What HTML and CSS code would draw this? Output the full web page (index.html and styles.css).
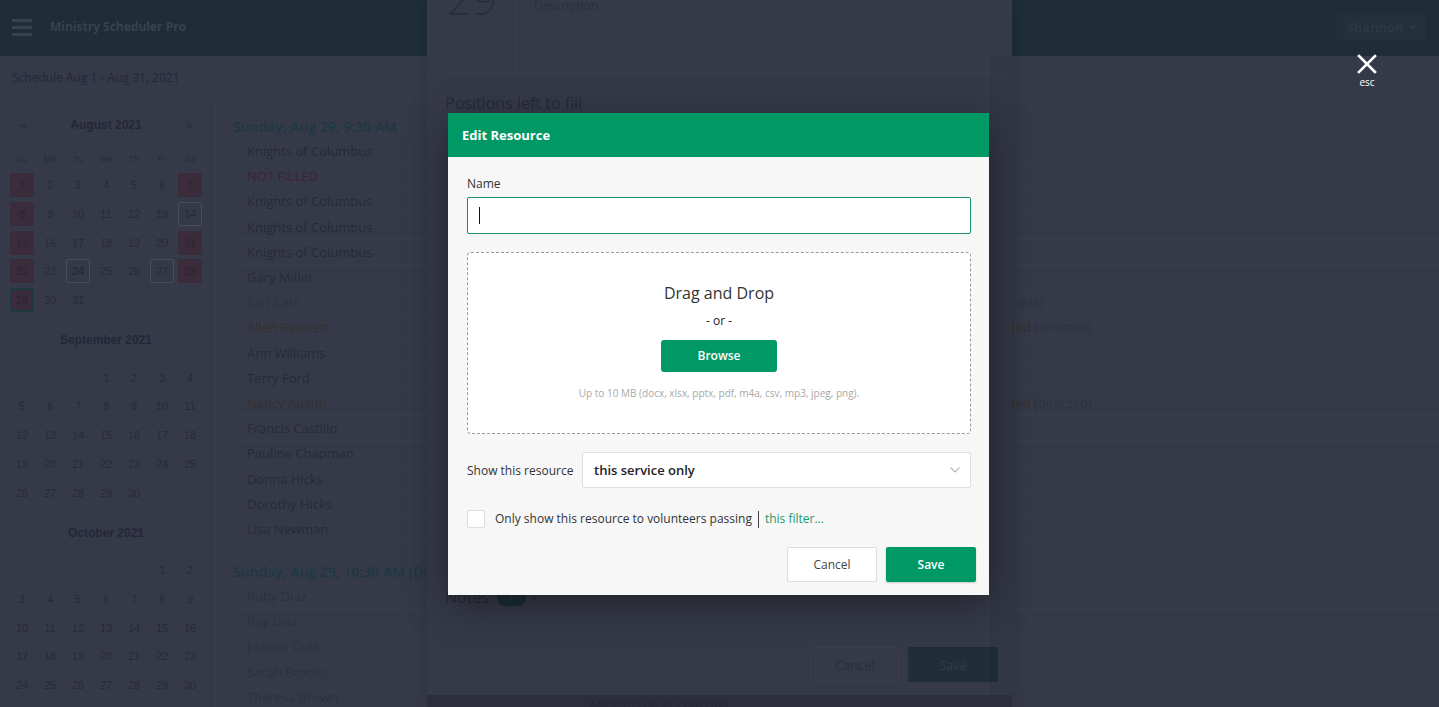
FILE: index.html
```html
<!DOCTYPE html>
<html lang="en">
<head>
<meta charset="utf-8">
<title>Ministry Scheduler Pro</title>
<link rel="stylesheet" href="styles.css">
</head>
<body>
<div class="app">
  <header class="topbar">
    <svg class="burger" viewBox="0 0 20 17" width="20" height="17"><rect x="0" y="0" width="20" height="3"/><rect x="0" y="7" width="20" height="3"/><rect x="0" y="14" width="20" height="3"/></svg>
    <div class="brand">Ministry Scheduler Pro</div>
    <div class="user">Shannon <span class="caret"></span></div>
  </header>
  <div class="subbar">Schedule Aug 1 - Aug 31, 2021</div>
  <div class="main">
    <aside class="cal">
      <div class="month">
        <div class="month-title"><span class="nav">&#9664;</span><span>August 2021</span><span class="nav">&#9654;</span></div>
        <div class="dow"><span>Su</span><span>Mo</span><span>Tu</span><span>We</span><span>Th</span><span>Fr</span><span>Sa</span></div>
        <div class="days aug">
          <span class="d hl">1</span><span class="d">2</span><span class="d">3</span><span class="d">4</span><span class="d">5</span><span class="d">6</span><span class="d hl">7</span>
          <span class="d hl">8</span><span class="d">9</span><span class="d">10</span><span class="d">11</span><span class="d">12</span><span class="d">13</span><span class="d bd">14</span>
          <span class="d hl">15</span><span class="d">16</span><span class="d">17</span><span class="d">18</span><span class="d">19</span><span class="d">20</span><span class="d hl">21</span>
          <span class="d hl">22</span><span class="d">23</span><span class="d bd b">24</span><span class="d">25</span><span class="d">26</span><span class="d bd">27</span><span class="d hl">28</span>
          <span class="d hl sel">29</span><span class="d">30</span><span class="d">31</span>
        </div>
      </div>
      <div class="month">
        <div class="month-title"><span></span><span>September 2021</span><span></span></div>
        <div class="days">
          <span></span><span></span><span></span><span class="d">1</span><span class="d">2</span><span class="d">3</span><span class="d">4</span>
          <span class="d">5</span><span class="d">6</span><span class="d">7</span><span class="d">8</span><span class="d">9</span><span class="d">10</span><span class="d">11</span>
          <span class="d">12</span><span class="d">13</span><span class="d">14</span><span class="d">15</span><span class="d">16</span><span class="d">17</span><span class="d">18</span>
          <span class="d">19</span><span class="d">20</span><span class="d">21</span><span class="d">22</span><span class="d">23</span><span class="d">24</span><span class="d">25</span>
          <span class="d">26</span><span class="d">27</span><span class="d">28</span><span class="d">29</span><span class="d">30</span>
        </div>
      </div>
      <div class="month">
        <div class="month-title"><span></span><span>October 2021</span><span></span></div>
        <div class="days">
          <span></span><span></span><span></span><span></span><span></span><span class="d">1</span><span class="d">2</span>
          <span class="d">3</span><span class="d">4</span><span class="d">5</span><span class="d">6</span><span class="d">7</span><span class="d">8</span><span class="d">9</span>
          <span class="d">10</span><span class="d">11</span><span class="d">12</span><span class="d">13</span><span class="d">14</span><span class="d">15</span><span class="d">16</span>
          <span class="d">17</span><span class="d">18</span><span class="d">19</span><span class="d">20</span><span class="d">21</span><span class="d">22</span><span class="d">23</span>
          <span class="d">24</span><span class="d">25</span><span class="d">26</span><span class="d">27</span><span class="d">28</span><span class="d">29</span><span class="d">30</span>
        </div>
      </div>
    </aside>
    <section class="list">
      <div class="svc">Sunday, Aug 29, 9:30 AM</div>
      <div class="row"><span class="nm">Knights of Columbus</span></div>
      <div class="row"><span class="nm nf">NOT FILLED</span></div>
      <div class="row"><span class="nm">Knights of Columbus</span></div>
      <div class="row"><span class="nm">Knights of Columbus</span></div>
      <div class="row"><span class="nm">Knights of Columbus</span></div>
      <div class="row"><span class="nm">Gary Miller</span></div>
      <div class="row"><span class="nm muted">Earl Carr</span><span class="st brown">(homemade)</span></div>
      <div class="row"><span class="nm brown">Allen Bennett</span><span class="st"><span class="brown">Requested</span> (directed)</span></div>
      <div class="row"><span class="nm">Ann Williams</span></div>
      <div class="row"><span class="nm">Terry Ford</span></div>
      <div class="row"><span class="nm brown">Nancy Austin</span><span class="st"><span class="brown">Requested</span> (directed)</span></div>
      <div class="row"><span class="nm">Francis Castillo</span></div>
      <div class="row"><span class="nm">Pauline Chapman</span></div>
      <div class="row"><span class="nm">Donna Hicks</span></div>
      <div class="row"><span class="nm">Dorothy Hicks</span></div>
      <div class="row"><span class="nm">Lisa Newman</span></div>
      <div class="svc second">Sunday, Aug 29, 10:30 AM (Domingo)</div>
      <div class="row"><span class="nm muted">Ruby Diaz</span></div>
      <div class="row"><span class="nm muted">Ray Diaz</span></div>
      <div class="row"><span class="nm muted">Joanne Diaz</span></div>
      <div class="row"><span class="nm muted">Sarah Brooks</span></div>
      <div class="row"><span class="nm muted">Theresa Brown</span></div>
    </section>
  </div>
</div>

<div class="panel">
  <div class="p-top">
    <div class="p-date"><span>29</span></div>
    <div class="p-desc">
      <div class="p-label">Description</div>
      <div class="p-box"></div>
    </div>
  </div>
  <div class="p-body">
    <div class="p-h">Positions left to fill</div>
    <div class="p-space"></div>
    <div class="p-notes">Notes <span class="badge">1</span> <span class="tri">&#9656;</span></div>
    <div class="p-actions">
      <div class="p-btn p-cancel">Cancel</div>
      <div class="p-btn p-save">Save</div>
    </div>
  </div>
  <div class="p-foot">Ministro de Eucharistia</div>
  <div class="p-scroll"></div>
</div>

<div class="close">
  <svg viewBox="0 0 20 20" width="20" height="20"><path d="M2 2 L18 18 M18 2 L2 18"/></svg>
  <span>esc</span>
</div>

<div class="modal">
  <div class="m-head">Edit Resource</div>
  <div class="m-body">
    <div class="m-label">Name</div>
    <div class="m-input"><span class="cursor"></span></div>
    <div class="drop">
      <div class="drop-title">Drag and Drop</div>
      <div class="drop-or">- or -</div>
      <div class="browse">Browse</div>
      <div class="drop-hint">Up to 10 MB (docx, xlsx, pptx, pdf, m4a, csv, mp3, jpeg, png).</div>
    </div>
    <div class="show-row">
      <span class="show-label">Show this resource</span>
      <div class="select">
        <span>this service only</span>
        <svg class="chev" viewBox="0 0 10 6" width="10" height="6"><path d="M0.5 0.5 L5 5 L9.5 0.5"/></svg>
      </div>
    </div>
    <div class="check-row">
      <span class="checkbox"></span>
      <span class="check-text">Only show this resource to volunteers passing</span>
      <span class="sep"></span>
      <span class="filter">this filter...</span>
    </div>
    <div class="m-foot">
      <div class="m-btn m-cancel">Cancel</div>
      <div class="m-btn m-save">Save</div>
    </div>
  </div>
</div>
</body>
</html>
```

FILE: styles.css
```css
* { box-sizing: border-box; }

html, body {
  margin: 0;
  padding: 0;
}

body {
  width: 1439px;
  height: 707px;
  overflow: hidden;
  position: relative;
  background: #363a48;
  font-family: "Open Sans", "DejaVu Sans", sans-serif;
  color: #262a39;
}

.app {
  width: 1439px;
  height: 707px;
  display: flex;
  flex-direction: column;
}

/* top bar */
.topbar {
  height: 56px;
  flex: none;
  background: #1e2d36;
  display: flex;
  align-items: center;
  padding: 0 13px 0 12px;
}

.burger { fill: #36424d; flex: none; margin-top: -1px; }

.brand {
  margin-left: 18px;
  margin-top: -3px;
  font-size: 12px;
  font-weight: 700;
  color: #37434e;
}

.user {
  margin-left: auto;
  width: 89px;
  height: 27px;
  margin-top: -2px;
  background: #21303a;
  border-radius: 2px;
  display: flex;
  align-items: center;
  justify-content: center;
  gap: 5px;
  font-size: 13px;
  font-weight: 700;
  color: #2c3943;
}

.caret {
  width: 0;
  height: 0;
  border-left: 4px solid transparent;
  border-right: 4px solid transparent;
  border-top: 5px solid #2c3943;
}

.subbar {
  height: 44px;
  flex: none;
  padding-left: 12px;
  display: flex;
  align-items: center;
  font-size: 12px;
  color: #23273a;
  border-bottom: 1px solid #3a3e4c;
}

.main {
  flex: 1;
  display: flex;
  min-height: 0;
}

/* calendar */
.cal {
  width: 216px;
  flex: none;
  border-right: 1px solid #3a3e4c;
  padding: 15px 0 0 8px;
  font-family: "Liberation Sans", Arial, sans-serif;
  color: #272a39;
}

.month { width: 196px; }
.month + .month { margin-top: 18px; }

.month-title {
  display: grid;
  grid-template-columns: 28px 1fr 28px;
  height: 20px;
  align-items: center;
  text-align: center;
  font-size: 12px;
  font-weight: 700;
  color: #242738;
}

.nav {
  font-size: 9px;
  color: #2d3141;
  font-weight: 400;
}

.dow {
  margin-top: 15px;
  height: 18px;
  display: grid;
  grid-template-columns: repeat(7, 28px);
  align-items: center;
  text-align: center;
  font-size: 9px;
  color: #282b3a;
}

.days {
  margin-top: 15.5px;
  display: grid;
  grid-template-columns: repeat(7, 28px);
  grid-auto-rows: 24px;
  row-gap: 4.75px;
  font-size: 11px;
}

.dow + .days { margin-top: 5px; }

.d {
  width: 24px;
  height: 24px;
  justify-self: center;
  display: flex;
  align-items: center;
  justify-content: center;
  border-radius: 2px;
}

.d.hl { background: #3a2c3a; color: #2c2433; }
.d.bd { border: 1px solid #4a4e5a; }
.d.b { font-weight: 700; }
.d.sel { border: 2px solid #1c3a40; }

/* list */
.list {
  flex: 1;
  padding: 15px 0 0 17px;
  overflow: hidden;
}

.svc {
  height: 24px;
  line-height: 24px;
  font-size: 14px;
  font-weight: 600;
  color: #1d3843;
  white-space: nowrap;
}

.svc.second { margin-top: 18px; }

.row {
  height: 25.2px;
  border-bottom: 1px solid #3a3e4c;
  display: grid;
  grid-template-columns: 719px auto;
  align-items: center;
  padding-left: 14px;
  font-size: 13px;
  white-space: nowrap;
}

.nm { color: #262a39; }
.nm.nf { color: #3c2434; }
.muted { color: #2d3140; }
.brown { color: #35302f; }
.st { color: #2e3241; }

/* middle panel */
.panel {
  position: absolute;
  left: 427px;
  top: 0;
  width: 585px;
  height: 707px;
  background: #363a48;
  box-shadow: 0 0 14px rgba(0, 0, 0, 0.15);
  display: flex;
  flex-direction: column;
  overflow: hidden;
}

.p-top {
  height: 74px;
  flex: none;
  display: flex;
  border-bottom: 1px solid #3a3e4c;
}

.p-date {
  width: 90px;
  flex: none;
  border-right: 1px solid #3a3e4c;
  overflow: hidden;
  padding-left: 20px;
}

.p-date span {
  display: block;
  margin-top: -24px;
  font-size: 44px;
  line-height: 44px;
  font-weight: 300;
  color: #2a2e3c;
}

.p-desc {
  flex: 1;
  padding: 0 19px 0 17px;
}

.p-label {
  margin-top: -2px;
  height: 16px;
  line-height: 16px;
  font-size: 12px;
  color: #2b2f3e;
}

.p-box {
  margin-top: 6px;
  height: 34px;
  border: 1px solid #393d4b;
  border-radius: 2px;
}

.p-body {
  flex: 1;
  padding: 0 14px 0 18px;
  display: flex;
  flex-direction: column;
}

.p-h {
  margin-top: 18px;
  height: 22px;
  line-height: 22px;
  font-size: 16px;
  color: #262a39;
}

.p-space { height: 472px; flex: none; }

.p-notes {
  height: 22px;
  display: flex;
  align-items: center;
  gap: 6px;
  font-size: 16px;
  color: #262a39;
}

.badge {
  width: 29px;
  height: 17px;
  border-radius: 8px;
  background: #1e2d36;
  color: #2d3d48;
  font-size: 11px;
  display: flex;
  align-items: center;
  justify-content: center;
  margin-left: 2px;
}

.tri { font-size: 10px; color: #2b2f3d; }

.p-actions {
  margin-top: 39px;
  display: flex;
  justify-content: flex-end;
  gap: 9px;
}

.p-btn {
  width: 90px;
  height: 35px;
  display: flex;
  align-items: center;
  justify-content: center;
  font-size: 13px;
  border-radius: 2px;
}

.p-cancel { border: 1px solid #3b3f4d; color: #2a2e3c; width: 89px; }
.p-save { background: #1f2e37; color: #2e3e48; }

.p-foot {
  margin-top: auto;
  height: 12px;
  flex: none;
  background: #2c2f3b;
  padding-left: 163px;
  font-size: 13px;
  line-height: 18px;
  color: #24273a;
  overflow: hidden;
  white-space: nowrap;
}

.p-scroll {
  position: absolute;
  right: 0;
  top: 56px;
  width: 22px;
  height: 639px;
  background: rgba(0, 0, 0, 0.04);
}

/* close */
.close {
  position: absolute;
  left: 1347px;
  top: 54px;
  width: 40px;
  display: flex;
  flex-direction: column;
  align-items: center;
  color: #ffffff;
}

.close svg {
  stroke: #ffffff;
  stroke-width: 2.6;
  fill: none;
  stroke-linecap: square;
}

.close span {
  font-size: 10px;
  line-height: 12px;
  margin-top: 2px;
}

/* modal */
.modal {
  position: absolute;
  left: 448px;
  top: 113px;
  width: 541px;
  height: 482px;
  background: #f7f7f7;
  box-shadow: 0 10px 40px rgba(0, 0, 0, 0.4);
  display: flex;
  flex-direction: column;
}

.m-head {
  height: 44px;
  flex: none;
  background: #009966;
  color: #ffffff;
  font-size: 13px;
  font-weight: 700;
  display: flex;
  align-items: center;
  padding-left: 14px;
  padding-bottom: 1px;
}

.m-body {
  flex: 1;
  padding: 19px 18px 0 19px;
  display: flex;
  flex-direction: column;
}

.m-label {
  height: 16px;
  line-height: 16px;
  font-size: 12px;
  color: #333333;
}

.m-input {
  margin-top: 5px;
  height: 37px;
  background: #ffffff;
  border: 1px solid #1b8f66;
  border-radius: 2px;
  display: flex;
  align-items: center;
  padding-left: 11px;
}

.cursor {
  width: 1px;
  height: 17px;
  background: #111111;
}

.drop {
  margin-top: 18px;
  height: 182px;
  background: #ffffff;
  border: 1px dashed #9a9a9a;
  border-radius: 4px;
  display: flex;
  flex-direction: column;
  align-items: center;
  padding-top: 29px;
}

.drop-title {
  height: 22px;
  line-height: 22px;
  font-size: 16px;
  color: #333333;
}

.drop-or {
  margin-top: 9px;
  height: 16px;
  line-height: 16px;
  font-size: 12px;
  color: #222222;
}

.browse {
  margin-top: 11px;
  width: 116px;
  height: 32px;
  background: #009966;
  border-radius: 3px;
  color: #ffffff;
  font-size: 12px;
  font-weight: 600;
  display: flex;
  align-items: center;
  justify-content: center;
  padding-bottom: 1px;
}

.drop-hint {
  margin-top: 14px;
  font-size: 10px;
  line-height: 14px;
  color: #a8a8a8;
}

.show-row {
  margin-top: 18px;
  height: 36px;
  display: flex;
  align-items: center;
}

.show-label {
  width: 115px;
  flex: none;
  font-size: 12px;
  color: #333333;
}

.select {
  flex: 1;
  height: 36px;
  background: #ffffff;
  border: 1px solid #dedede;
  border-radius: 2px;
  display: flex;
  align-items: center;
  justify-content: space-between;
  padding: 0 10px 0 11px;
  font-size: 13px;
  font-weight: 600;
  color: #222222;
}

.chev {
  fill: none;
  stroke: #b8b8b8;
  stroke-width: 1.2;
}

.check-row {
  margin-top: 22px;
  height: 18px;
  display: flex;
  align-items: center;
  font-size: 12px;
  color: #333333;
}

.check-text { margin-top: -2px; }
.filter { color: #1a9a6a; margin-top: -2px; }

.checkbox {
  width: 18px;
  height: 18px;
  flex: none;
  background: #ffffff;
  border: 1px solid #dddddd;
  border-radius: 2px;
  margin-right: 10px;
}

.sep {
  width: 1px;
  height: 17px;
  background: #444444;
  margin: 0 6px 0 6px;
}

.m-foot {
  margin-top: 19px;
  margin-right: -5px;
  display: flex;
  justify-content: flex-end;
  gap: 9px;
}

.m-btn {
  width: 90px;
  height: 35px;
  display: flex;
  align-items: center;
  justify-content: center;
  font-size: 12px;
  border-radius: 2px;
}

.m-cancel {
  background: #ffffff;
  border: 1px solid #dddddd;
  color: #444444;
}

.m-save {
  background: #009966;
  color: #ffffff;
  font-weight: 600;
  box-shadow: 0 1px 2px rgba(0, 0, 0, 0.2);
}
```
